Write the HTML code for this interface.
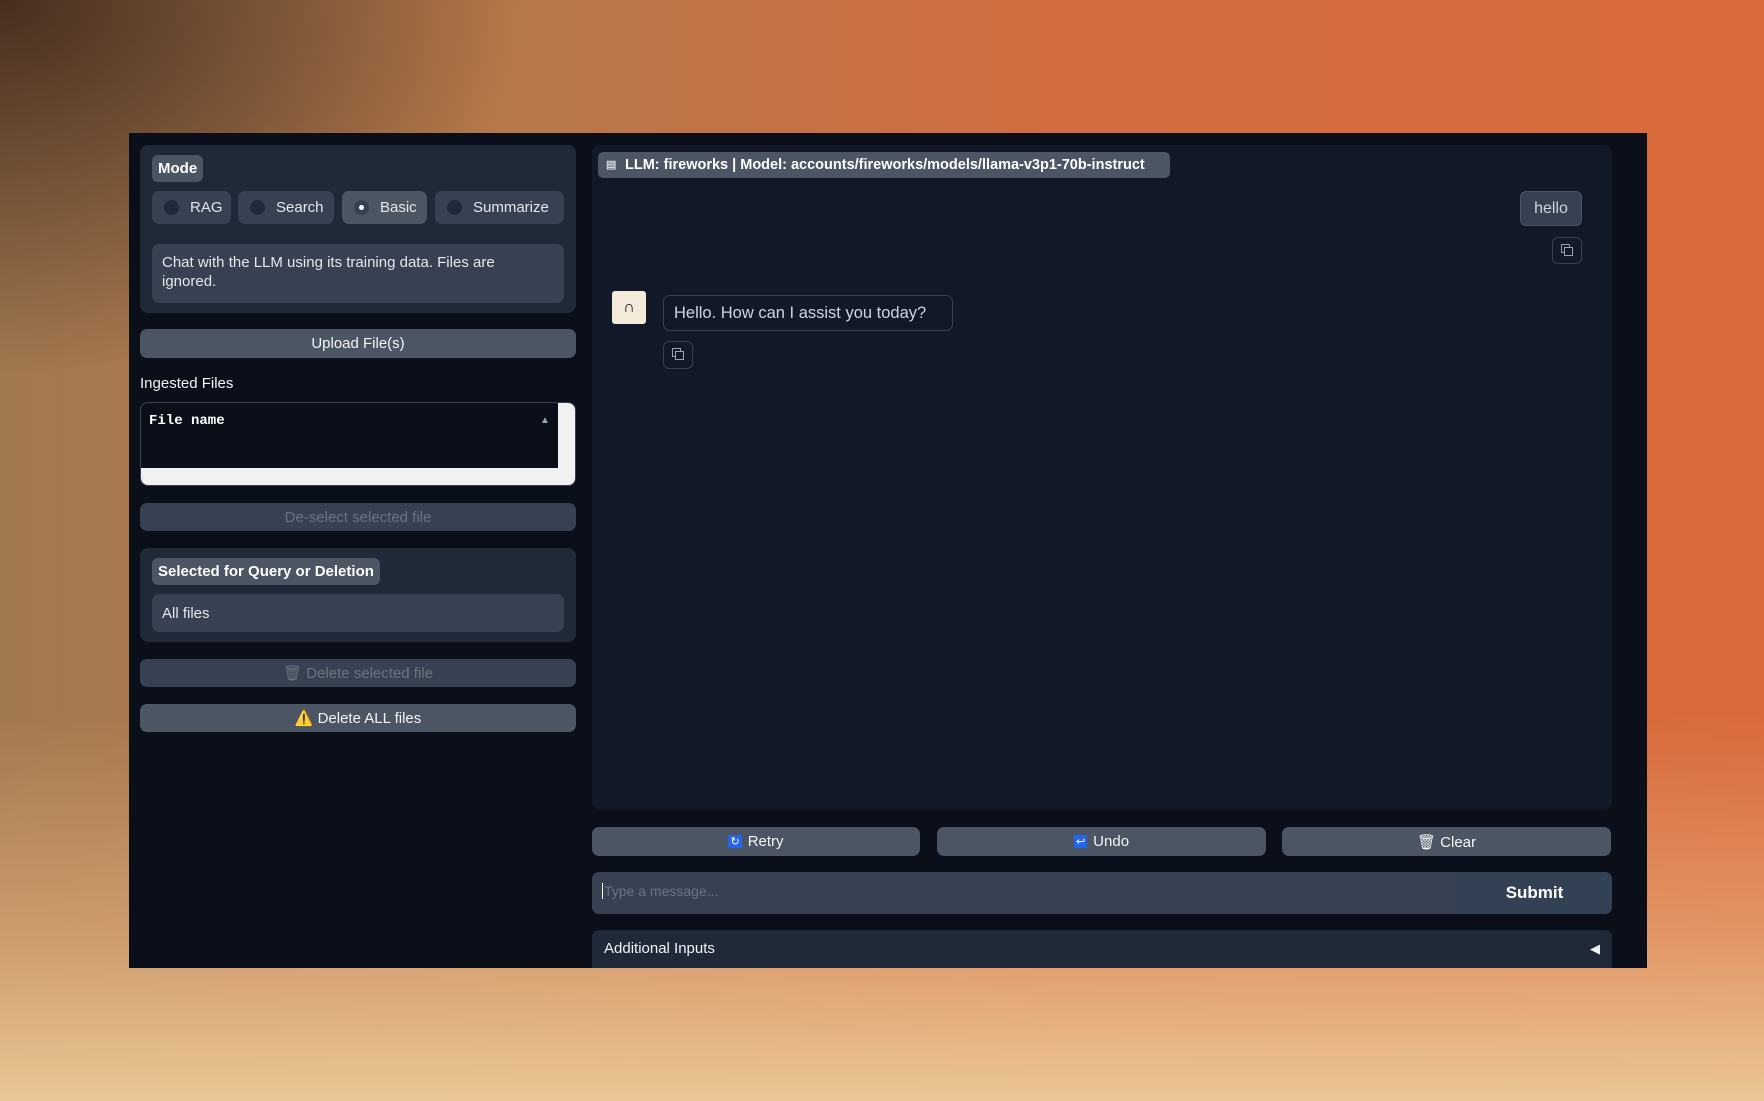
<!DOCTYPE html>
<html><head><meta charset="utf-8"><style>
*{box-sizing:border-box;margin:0;padding:0}
body{width:1764px;height:1101px;overflow:hidden;position:relative;font-family:"Liberation Sans",sans-serif;
background:
radial-gradient(ellipse 700px 500px at 0% 0%, rgba(65,42,28,0.95), rgba(65,42,28,0) 75%),
linear-gradient(to top, rgba(235,198,150,1) 0%, rgba(232,180,130,0.6) 15%, rgba(232,180,130,0) 35%),
linear-gradient(90deg,#a27850 0%,#b8784a 30%,#d26c3e 60%,#d9693a 100%);}
.a{position:absolute}
.win{left:129px;top:133px;width:1518px;height:835px;background:#0b0f19}
.blk{background:#1f2937;border-radius:8px}
.lbl{background:#4b5563;color:#fff;font-weight:bold;font-size:15px;border-radius:6px;padding:0 6px;line-height:27px}
.radio{background:#374151;border-radius:7px;height:33px;color:#e5e7eb;font-size:15px;display:flex;align-items:center;padding-left:12px}
.radio i{width:15px;height:15px;border-radius:50%;background:#1f2937;margin-right:11px;display:inline-block;position:relative}
.btn{background:#4b5563;border-radius:7px;color:#f3f4f6;font-size:15px;display:flex;align-items:center;justify-content:center}
.dis{background:#374151;color:#6b7280}
.inp{background:#374151;border-radius:7px;color:#e5e7eb;font-size:15px}
.copy{border:1px solid #374151;border-radius:6px}
</style></head><body>
<div class="a win"></div>
<div class="a blk" style="left:140px;top:145px;width:436px;height:168px"></div>
<div class="a lbl" style="left:152px;top:155px">Mode</div>
<div class="a radio" style="left:152px;top:191px;width:79px"><i></i>RAG</div>
<div class="a radio" style="left:238px;top:191px;width:96px"><i></i>Search</div>
<div class="a radio" style="left:342px;top:191px;width:85px;background:#4b5563"><i style="background:#374151"><b style="position:absolute;left:5px;top:5px;width:5px;height:5px;border-radius:50%;background:#fff"></b></i>Basic</div>
<div class="a radio" style="left:435px;top:191px;width:129px"><i></i>Summarize</div>
<div class="a inp" style="left:152px;top:244px;width:412px;height:59px;padding:9px 35px 9px 10px;line-height:19px">Chat with the LLM using its training data. Files are ignored.</div>
<div class="a btn" style="left:140px;top:329px;width:436px;height:29px">Upload File(s)</div>
<div class="a" style="left:140px;top:375px;color:#f3f4f6;font-size:15px">Ingested Files</div>
<div class="a" style="left:140px;top:402px;width:436px;height:84px;background:#0b0f19;border:1px solid #374151;border-radius:8px;overflow:hidden">
<div class="a" style="left:8px;top:10px;color:#fff;font:bold 14px 'Liberation Mono',monospace">File name</div>
<div class="a" style="left:399px;top:12px;color:#9ca3af;font-size:10px">▲</div>
<div class="a" style="right:0;top:0;width:17px;height:84px;background:#f1f1f1"></div>
<div class="a" style="left:0;bottom:0;width:436px;height:17px;background:#f1f1f1"></div>
</div>
<div class="a btn dis" style="left:140px;top:503px;width:436px;height:28px">De-select selected file</div>
<div class="a blk" style="left:140px;top:548px;width:436px;height:94px"></div>
<div class="a lbl" style="left:152px;top:558px">Selected for Query or Deletion</div>
<div class="a inp" style="left:152px;top:594px;width:412px;height:38px;padding:11px 10px">All files</div>
<div class="a btn dis" style="left:140px;top:659px;width:436px;height:28px">🗑 Delete selected file</div>
<div class="a btn" style="left:140px;top:704px;width:436px;height:28px">⚠️ Delete ALL files</div>
<div class="a" style="left:592px;top:145px;width:1020px;height:665px;background:#111827;border-radius:8px"></div>
<div class="a" style="left:598px;top:152px;width:572px;height:26px;background:#4b5563;border-radius:5px;color:#fff;font-weight:bold;font-size:14.5px;line-height:26px;padding-left:27px">
<span class="a" style="left:8px;top:0;font-size:11px;color:#d1d5db">▤</span>LLM: fireworks | Model: accounts/fireworks/models/llama-v3p1-70b-instruct</div>
<div class="a" style="left:1520px;top:191px;width:62px;height:35px;background:#374151;border:1px solid #4b5563;border-radius:6px;color:#d1d5db;font-size:16px;text-align:center;line-height:33px">hello</div>
<div class="a copy" style="left:1552px;top:237px;width:30px;height:27px"></div>
<div class="a" style="left:1561px;top:244px;width:9px;height:9px;border:1px solid #9ca3af;border-radius:1px"></div>
<div class="a" style="left:1564px;top:247px;width:9px;height:9px;border:1px solid #9ca3af;background:#111827"></div>
<div class="a" style="left:612px;top:291px;width:34px;height:33px;background:#f3ead9;border-radius:3px;color:#111;font-weight:bold;font-size:16px;text-align:center;line-height:33px">∩</div>
<div class="a" style="left:663px;top:295px;width:290px;height:36px;border:1px solid #374151;border-radius:7px;color:#d1d5db;font-size:16.5px;line-height:34px;padding-left:10px">Hello. How can I assist you today?</div>
<div class="a copy" style="left:663px;top:341px;width:30px;height:28px"></div>
<div class="a" style="left:672px;top:348px;width:9px;height:9px;border:1px solid #9ca3af"></div>
<div class="a" style="left:675px;top:351px;width:9px;height:9px;border:1px solid #9ca3af;background:#111827"></div>
<div class="a btn" style="left:592px;top:827px;width:328px;height:29px"><span style="background:#2563eb;color:#fff;font-size:11px;padding:0 2px;margin-right:6px">↻</span>Retry</div>
<div class="a btn" style="left:937px;top:827px;width:329px;height:29px"><span style="background:#2563eb;color:#fff;font-size:11px;padding:0 2px;margin-right:6px">↩</span>Undo</div>
<div class="a btn" style="left:1282px;top:827px;width:329px;height:29px">🗑 Clear</div>
<div class="a" style="left:592px;top:872px;width:1020px;height:42px;background:#374151;border-radius:7px;overflow:hidden">
<div class="a" style="left:10px;top:11px;color:#6b7280;font-size:14px;border-left:1px solid #fff;padding-left:1px">Type a message...</div>
<div class="a" style="left:865px;top:0;width:155px;height:42px;background:#334155;color:#fff;font-weight:bold;font-size:17px;text-align:center;line-height:42px">Submit</div>
</div>
<div class="a" style="left:592px;top:930px;width:1020px;height:38px;background:#1f2937;border-radius:7px 7px 0 0;color:#f3f4f6;font-size:15px;line-height:38px;padding-left:12px">Additional Inputs<span style="position:absolute;right:12px;font-size:13px">◀</span></div>
</body></html>
